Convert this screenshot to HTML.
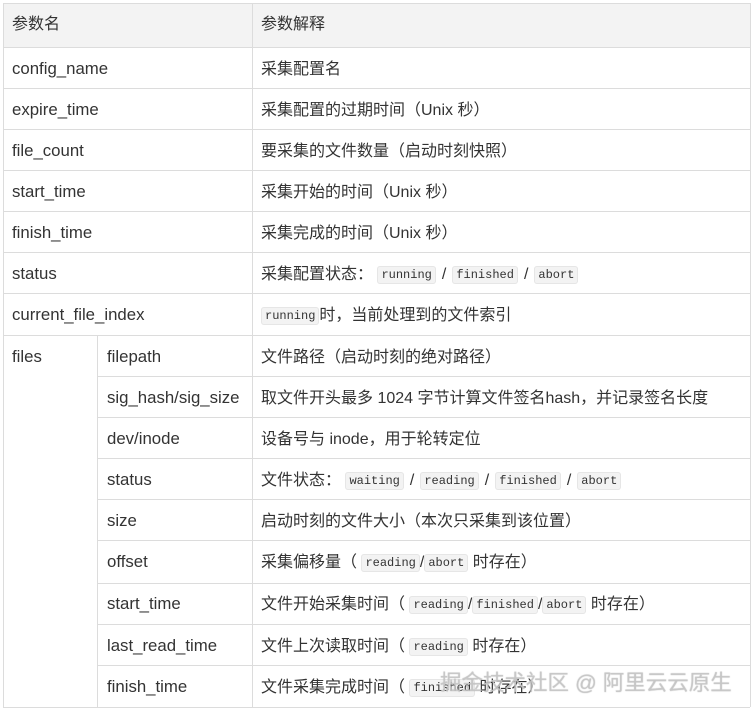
<!DOCTYPE html>
<html><head><meta charset="utf-8"><style>
body{margin:0;width:753px;height:710px;background:#fff;overflow:hidden;position:relative;font-family:"Liberation Sans","Microsoft YaHei","Noto Sans CJK SC",sans-serif;font-size:16px;color:#333}
.h{position:absolute;left:0;width:753px;height:1px;background:#dcdcdc}
.v{position:absolute;top:3px;width:1px;background:#dcdcdc}
.t{position:absolute;white-space:nowrap;line-height:20px}
.l{font-size:16.8px}
code{font-family:"Liberation Mono","Noto Serif CJK SC",monospace;font-size:12px;background:#f3f3f3;border:1px solid #e6e6e6;border-radius:3px;padding:1px 3px;color:#333;position:relative;top:-1px}
.s{margin:0 6px}
.wm{position:absolute;left:440px;top:666px;font-size:21.5px;color:rgba(200,200,200,0.85);font-family:"Liberation Sans","Noto Sans CJK SC",sans-serif;white-space:nowrap;text-shadow:0 0 1px rgba(120,120,120,.5)}
</style></head><body>
<div style="position:absolute;left:3px;top:3px;width:747px;height:44px;background:#f3f3f3"></div>
<div class="h" style="top:3px;left:3px;width:747px"></div>
<div class="h" style="top:47px;left:3px;width:747px"></div>
<div class="h" style="top:88px;left:3px;width:747px"></div>
<div class="h" style="top:129px;left:3px;width:747px"></div>
<div class="h" style="top:170px;left:3px;width:747px"></div>
<div class="h" style="top:211px;left:3px;width:747px"></div>
<div class="h" style="top:252px;left:3px;width:747px"></div>
<div class="h" style="top:293px;left:3px;width:747px"></div>
<div class="h" style="top:335px;left:3px;width:747px"></div>
<div class="h" style="top:376px;left:97px;width:653px"></div>
<div class="h" style="top:417px;left:97px;width:653px"></div>
<div class="h" style="top:458px;left:97px;width:653px"></div>
<div class="h" style="top:499px;left:97px;width:653px"></div>
<div class="h" style="top:540px;left:97px;width:653px"></div>
<div class="h" style="top:583px;left:97px;width:653px"></div>
<div class="h" style="top:624px;left:97px;width:653px"></div>
<div class="h" style="top:665px;left:97px;width:653px"></div>
<div class="h" style="top:707px;left:3px;width:747px"></div>
<div class="v" style="left:3px;height:704px"></div>
<div class="v" style="left:252px;height:704px"></div>
<div class="v" style="left:750px;height:704px"></div>
<div class="v" style="left:97px;top:335px;height:372px"></div>

<div class="t" style="left:12px;top:15px">参数名</div>
<div class="t" style="left:261px;top:15px">参数解释</div>
<div class="t l" style="left:12px;top:59px">config_name</div><div class="t" style="left:261px;top:60px">采集配置名</div>
<div class="t l" style="left:12px;top:100px">expire_time</div><div class="t" style="left:261px;top:101px">采集配置的过期时间（Unix 秒）</div>
<div class="t l" style="left:12px;top:141px">file_count</div><div class="t" style="left:261px;top:142px">要采集的文件数量（启动时刻快照）</div>
<div class="t l" style="left:12px;top:182px">start_time</div><div class="t" style="left:261px;top:183px">采集开始的时间（Unix 秒）</div>
<div class="t l" style="left:12px;top:223px">finish_time</div><div class="t" style="left:261px;top:224px">采集完成的时间（Unix 秒）</div>
<div class="t l" style="left:12px;top:264px">status</div><div class="t" style="left:261px;top:265px">采集配置状态： <code>running</code><span class="s">/</span><code>finished</code><span class="s">/</span><code>abort</code></div>
<div class="t l" style="left:12px;top:305px">current_file_index</div><div class="t" style="left:261px;top:306px"><code>running</code>时，当前处理到的文件索引</div>
<div class="t l" style="left:12px;top:347px">files</div>
<div class="t l" style="left:107px;top:347px">filepath</div><div class="t" style="left:261px;top:348px">文件路径（启动时刻的绝对路径）</div>
<div class="t l" style="left:107px;top:388px">sig_hash/sig_size</div><div class="t" style="left:261px;top:389px">取文件开头最多 1024 字节计算文件签名hash，并记录签名长度</div>
<div class="t l" style="left:107px;top:429px">dev/inode</div><div class="t" style="left:261px;top:430px">设备号与 inode，用于轮转定位</div>
<div class="t l" style="left:107px;top:470px">status</div><div class="t" style="left:261px;top:471px">文件状态： <code>waiting</code><span class="s">/</span><code>reading</code><span class="s">/</span><code>finished</code><span class="s">/</span><code>abort</code></div>
<div class="t l" style="left:107px;top:511px">size</div><div class="t" style="left:261px;top:512px">启动时刻的文件大小（本次只采集到该位置）</div>
<div class="t l" style="left:107px;top:552px">offset</div><div class="t" style="left:261px;top:553px">采集偏移量（ <code>reading</code>/<code>abort</code> 时存在）</div>
<div class="t l" style="left:107px;top:594px">start_time</div><div class="t" style="left:261px;top:595px">文件开始采集时间（ <code>reading</code>/<code>finished</code>/<code>abort</code> 时存在）</div>
<div class="t l" style="left:107px;top:636px">last_read_time</div><div class="t" style="left:261px;top:637px">文件上次读取时间（ <code>reading</code> 时存在）</div>
<div class="t l" style="left:107px;top:677px">finish_time</div><div class="t" style="left:261px;top:678px">文件采集完成时间（ <code>finished</code> 时存在）</div>
<div class="wm">掘金技术社区 @ 阿里云云原生</div>
</body></html>
